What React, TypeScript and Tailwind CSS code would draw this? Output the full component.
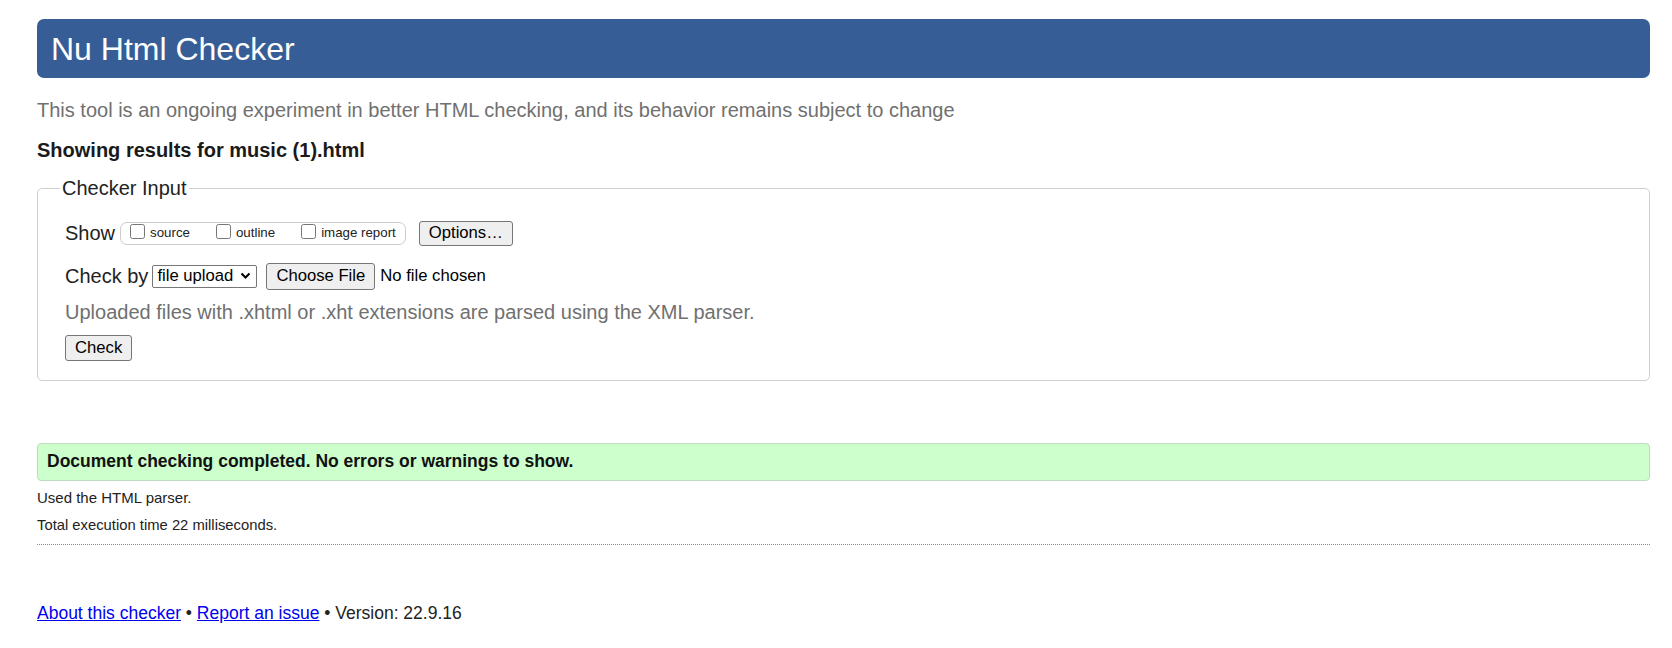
import React from "react";

const btn =
  "inline-flex items-center justify-center bg-[#efefef] border border-[#767676] rounded-[3px] text-[16.67px] text-black leading-none";

const showOptions = [
  { id: "source", label: "source", gap: "ml-0" },
  { id: "outline", label: "outline", gap: "ml-[26px]" },
  { id: "image", label: "image report", gap: "ml-[26px]" },
];

export default function App() {
  return (
    <div className="min-h-screen bg-white pt-[19px] pl-[37px] pr-[22px] font-['Liberation_Sans',Arial,sans-serif] text-[#222]">
      {/* header */}
      <div className="h-[59px] flex items-center pl-[14px] rounded-[7px] bg-[#365d96]">
        <h1 className="text-[32px] leading-none text-white">Nu Html Checker</h1>
      </div>

      <p className="mt-[20px] text-[20px] leading-[24px] text-[#707070]">
        This tool is an ongoing experiment in better HTML checking, and its behavior remains subject to change
      </p>
      <p className="mt-[16px] text-[20px] leading-[24px] font-bold text-[#1a1a1a]">
        Showing results for music (1).html
      </p>

      <fieldset className="mt-[14px] border border-[#cfcfcf] rounded-[5px] pl-[27px] pt-[20px] pb-[19px]">
        <legend className="ml-[-5px] px-[2px] text-[20px] leading-[24px] text-[#222]">Checker Input</legend>

        <div className="flex items-center h-[26px]">
          <span className="text-[20px] leading-none">Show</span>
          <div className="ml-[5px] h-[23px] flex items-center pl-[9px] pr-[9px] border border-[#cccccc] rounded-[7px]">
            {showOptions.map((o) => (
              <label key={o.id} className={`flex items-center ${o.gap}`}>
                <input type="checkbox" className="w-[15px] h-[15px] m-0 mb-[4px]" />
                <span className="ml-[5px] text-[13.3px] leading-none">{o.label}</span>
              </label>
            ))}
          </div>
          <button className={`${btn} ml-[13px] h-[25px] px-[9px]`}>Options…</button>
        </div>

        <div className="flex items-center h-[28px] mt-[16px]">
          <span className="text-[20px] leading-none">Check by</span>
          <div className="ml-[4px] h-[23px] w-[105px] flex items-center justify-between pl-[4px] pr-[5px] border border-[#767676] rounded-[2px] bg-white">
            <span className="text-[16.67px] leading-none text-black">file upload</span>
            <svg width="11" height="8" viewBox="0 0 11 8" fill="none">
              <path d="M1.5 1.5 L5.5 5.5 L9.5 1.5" stroke="#000" strokeWidth="2" />
            </svg>
          </div>
          <button className={`${btn} ml-[9px] h-[27px] px-[9px]`}>Choose File</button>
          <span className="ml-[5px] text-[16.67px] leading-none text-black">No file chosen</span>
        </div>

        <p className="mt-[10px] text-[20px] leading-[24px] text-[#707070]">
          Uploaded files with .xhtml or .xht extensions are parsed using the XML parser.
        </p>

        <div className="mt-[11px]">
          <button className={`${btn} h-[26px] px-[9px]`}>Check</button>
        </div>
      </fieldset>

      <div className="mt-[62px] h-[38px] flex items-center pl-[9px] bg-[#ccffcc] border border-[#c2d9c2] rounded-[4px]">
        <p className="text-[17.5px] leading-none font-bold text-[#111]">
          Document checking completed. No errors or warnings to show.
        </p>
      </div>

      <p className="mt-[8px] text-[15px] leading-[18px] text-[#222]">Used the HTML parser.</p>
      <p className="mt-[9px] text-[14.8px] leading-[18px] text-[#222]">Total execution time 22 milliseconds.</p>
      <div className="mt-[10px] border-t border-dotted border-[#8a8a8a]" />

      <p className="mt-[58px] text-[17.5px] leading-[21px] text-[#222]">
        <a href="#" className="text-[#0000ee] underline">About this checker</a>
        {" • "}
        <a href="#" className="text-[#0000ee] underline">Report an issue</a>
        {" • Version: 22.9.16"}
      </p>
    </div>
  );
}
